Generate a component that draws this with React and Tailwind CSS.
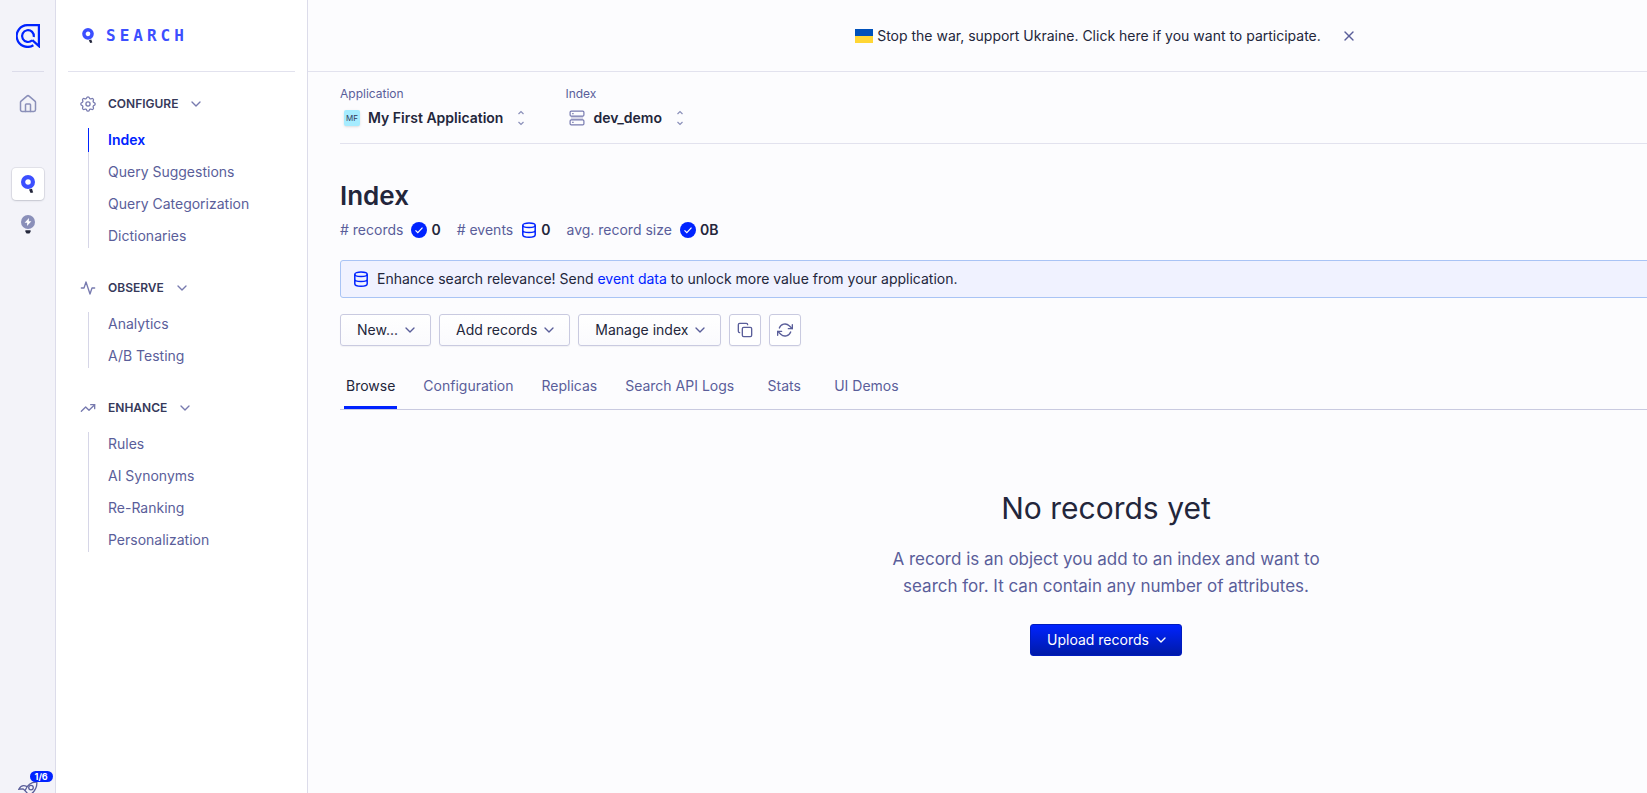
import React from 'react';
import { ChevronDown, Copy, House, TrendingUp, X } from 'lucide-react';
import { FiActivity, FiRefreshCw } from 'react-icons/fi';

const sections = [
  {
    title: 'CONFIGURE',
    icon: GearMark,
    items: ['Index', 'Query Suggestions', 'Query Categorization', 'Dictionaries'],
  },
  { title: 'OBSERVE', icon: FiActivity, items: ['Analytics', 'A/B Testing'] },
  {
    title: 'ENHANCE',
    icon: TrendingUp,
    items: ['Rules', 'AI Synonyms', 'Re-Ranking', 'Personalization'],
  },
];

const tabs = ['Browse', 'Configuration', 'Replicas', 'Search API Logs', 'Stats', 'UI Demos'];

// eight-lobed gear, cropped tight so it fills its box
function GearMark({ className }) {
  return (
    <svg
      viewBox="2 2 20 20"
      className={className}
      fill="none"
      stroke="currentColor"
      strokeWidth="1.6"
      strokeLinejoin="round"
    >
      <path d="M10.325 4.317c.426-1.756 2.924-1.756 3.350 0a1.724 1.724 0 0 0 2.573 1.066c1.543-.94 3.310.826 2.370 2.370a1.724 1.724 0 0 0 1.065 2.572c1.756.426 1.756 2.924 0 3.350a1.724 1.724 0 0 0-1.066 2.573c.94 1.543-.826 3.310-2.370 2.370a1.724 1.724 0 0 0-2.572 1.065c-.426 1.756-2.924 1.756-3.350 0a1.724 1.724 0 0 0-2.573-1.066c-1.543.94-3.310-.826-2.370-2.370a1.724 1.724 0 0 0-1.065-2.572c-1.756-.426-1.756-2.924 0-3.350a1.724 1.724 0 0 0 1.066-2.573c-.94-1.543.826-3.310 2.370-2.370.996.608 2.296.07 2.572-1.065z" />
      <circle cx="12" cy="12" r="2.6" />
    </svg>
  );
}

function AlgoliaLogo() {
  return (
    <svg viewBox="0 0 24 24" className="size-6" fill="none" stroke="#0023ff" strokeWidth="2.2">
      <path d="M17.4 21.2A10.9 10.9 0 1 1 12 1.1h10.9v21l-6.6-6" />
      <path d="M16.2 16.2A5.9 5.9 0 1 1 17.8 13" />
    </svg>
  );
}

function SearchMark({ className }) {
  return (
    <svg viewBox="0 0 14 18" className={className} fill="none">
      <circle cx="7" cy="7" r="4.9" stroke="#3c4fff" strokeWidth="4.2" />
      <path d="M8 14.6l3-.8 1.2 3.6-2.6.6z" fill="#23263b" />
    </svg>
  );
}

function BulbMark() {
  return (
    <svg viewBox="0 0 14 19" className="h-[19px] w-[14px]">
      <circle cx="7" cy="7" r="7" fill="#8a8fb9" />
      <path d="M8 3L3.6 7.8h2.6L6 11l4.4-4.8H7.8z" fill="#fff" />
      <path d="M4.4 15.2h5.2v1.5l-1.2 1.8H5.6l-1.2-1.8z" fill="#23263b" />
    </svg>
  );
}

function RocketMark() {
  return (
    <svg viewBox="0 0 20 20" className="size-5" fill="none" stroke="#5a5e9a" strokeWidth="1.3">
      <path d="M18.8 1.2c.4 5-1.2 9.2-7.6 13.2L7 9.6C9.4 3.8 13.4.9 18.8 1.2z" />
      <circle cx="13" cy="6.6" r="2.3" />
      <path d="M9 5.6C5.6 3.8 2.6 4.8.8 8.2L5 7.8l2 1.8M14.6 11.4c.8 3.2-.4 5.6-3.4 7.6v-4.6M5.2 13.2C3 14 2.2 16 2 18.2c2.2-.2 4.2-1 5-3.2" />
    </svg>
  );
}

function DatabaseMark() {
  return (
    <svg viewBox="0 0 16 16" className="size-4" fill="none" stroke="#0023ff" strokeWidth="1.5">
      <ellipse cx="8" cy="3.3" rx="6.2" ry="2.3" />
      <path d="M1.8 3.3v9.4c0 1.4 2.6 2.5 6.2 2.5s6.2-1.1 6.2-2.5V3.3M1.8 8.2c0 1.3 2.6 2.3 6.2 2.3s6.2-1 6.2-2.3" />
    </svg>
  );
}

function ServerMark() {
  return (
    <svg viewBox="0 0 16 16" className="size-4" fill="none" stroke="#777aaf" strokeWidth="1.2">
      <path d="M2 6h12v4H2z" fill="#d6d6e7" stroke="none" />
      <rect x="1.1" y="1.1" width="13.8" height="5" rx="1.2" fill="#fcfcfe" />
      <rect x="1.1" y="9.9" width="13.8" height="5" rx="1.2" fill="#fcfcfe" />
      <path d="M3.2 3.6h1.4M3.2 12.4h1.4" />
    </svg>
  );
}

function CheckMark() {
  return (
    <svg viewBox="0 0 16 16" className="size-4" fill="none">
      <circle cx="8" cy="8" r="8" fill="#0023ff" />
      <path d="M4.5 8.4l2.3 2.3 4.7-5" stroke="#fff" strokeWidth="1.2" />
    </svg>
  );
}

function UpDown() {
  return (
    <svg viewBox="0 0 8 16" className="h-4 w-2" fill="none" stroke="#8a8fb9" strokeWidth="1.2">
      <path d="M1.5 4L4 1.5 6.5 4M1.5 12L4 14.5 6.5 12" />
    </svg>
  );
}

function Flag() {
  return (
    <svg viewBox="0 0 18 14" className="h-[14px] w-[18px]">
      <path d="M0 0h18v7H0z" fill="#0051ba" />
      <path d="M0 7h18v7H0z" fill="#ffd635" />
    </svg>
  );
}

function Rail() {
  return (
    <nav className="flex w-14 shrink-0 flex-col items-center border-r border-[#dcdcea] bg-[#f3f3f9]">
      <div className="flex h-18 w-8 items-center justify-center border-b border-[#dcdcea]">
        <AlgoliaLogo />
      </div>
      <a href="#home" aria-label="Home" className="mt-[22px]">
        <House className="size-5 text-[#8a8fb9]" strokeWidth={1.8} />
      </a>
      <a
        href="#search"
        aria-label="Search"
        className="mt-[54px] flex size-8 items-center justify-center rounded-sm bg-white shadow-[0_0_0_1px_#23263b14,0_1px_2px_#23263b26]"
      >
        <SearchMark className="h-[18px] w-[14px]" />
      </a>
      <a href="#recommend" aria-label="Recommend" className="mt-[15px]">
        <BulbMark />
      </a>
      <a href="#setup" aria-label="Setup steps" className="relative mt-auto -mb-2">
        <RocketMark />
        <span className="absolute -top-2.5 left-3 rounded-full bg-[#0023ff] px-[5px] text-[9px] leading-[11px] font-bold text-white">
          1/6
        </span>
      </a>
    </nav>
  );
}

function Sidebar() {
  return (
    <aside className="w-[252px] shrink-0 border-r border-[#dcdcea] bg-white px-3 text-sm">
      <div className="flex h-18 items-center gap-3 border-b border-[#e2e2ee] pl-3.5">
        <SearchMark className="h-[15px] w-3" />
        <span className="font-['DejaVu_Sans_Mono',monospace] text-base font-bold tracking-[4px] text-[#3c4fff]">
          SEARCH
        </span>
      </div>
      <div className="flex flex-col gap-7 pt-5">
        {sections.map(({ title, icon: Icon, items }) => (
          <section key={title}>
            <button type="button" className="flex h-6 items-center pl-3 text-xs font-semibold text-[#36395a]">
              <Icon className="mr-3 size-4 text-[#777aaf]" />
              {title}
              <ChevronDown className="ml-2.5 size-4 text-[#777aaf]" />
            </button>
            <ul className="mt-3 ml-5 flex flex-col gap-2 bg-[linear-gradient(#d6d6e7,#d6d6e7)] bg-[length:1px_100%] bg-no-repeat">
              {items.map((item) => (
                <li key={item} className="h-6">
                  <a
                    href="#nav"
                    className={
                      item === 'Index'
                        ? 'block border-l border-[#0023ff] pl-[19px] leading-6 font-semibold text-[#0023ff]'
                        : 'block pl-5 leading-6 text-[#5a5e9a]'
                    }
                  >
                    {item}
                  </a>
                </li>
              ))}
            </ul>
          </section>
        ))}
      </div>
    </aside>
  );
}

function Stat({ label, value, icon }) {
  return (
    <div className="flex items-center">
      <dt className="mr-2 text-[#5a5e9a]">{label}</dt>
      <dd className="flex items-center gap-1 font-semibold">
        {icon}
        {value}
      </dd>
    </div>
  );
}

function MenuButton({ children }) {
  return (
    <button
      type="button"
      className="flex h-8 items-center gap-1 rounded-[3px] border border-[#c9cae0] bg-linear-to-b from-white to-[#fafafd] pr-3 pl-4 shadow-[0_1px_1px_#23263b0d]"
    >
      {children}
      <ChevronDown className="size-4 text-[#5a5e9a]" />
    </button>
  );
}

function IconButton({ label, icon: Icon }) {
  return (
    <button
      type="button"
      aria-label={label}
      className="flex size-8 items-center justify-center rounded-[3px] border border-[#c9cae0] bg-white shadow-[0_1px_1px_#23263b0d]"
    >
      <Icon className="size-4 text-[#5a5e9a]" />
    </button>
  );
}

function App() {
  return (
    <div className="flex h-screen overflow-hidden bg-[#fcfcfe] font-['Inter',sans-serif] text-sm text-[#23263b]">
      <Rail />
      <Sidebar />
      <main className="min-w-[1596px] flex-1">
        <div className="flex h-18 items-center justify-center border-b border-[#e2e2ee]">
          <a href="#ukraine" className="flex items-center gap-1">
            <Flag />
            Stop the war, support Ukraine. Click here if you want to participate.
          </a>
          <button type="button" aria-label="Close" className="ml-5">
            <X className="size-4 text-[#5a5e9a]" />
          </button>
        </div>

        <div className="px-8">
          <div className="flex h-18 gap-10 border-b border-[#e2e2ee] pt-3">
            <div>
              <div className="text-xs leading-5 text-[#5a5e9a]">Application</div>
              <button type="button" className="mt-0.5 flex items-center pl-1 leading-6 font-semibold">
                <span className="mr-2 flex size-4 items-center justify-center rounded-xs bg-[#a6ecff] text-[8px] font-normal text-[#36395a] shadow-sm">
                  MF
                </span>
                My First Application
                <span className="ml-3.5">
                  <UpDown />
                </span>
              </button>
            </div>
            <div>
              <div className="text-xs leading-5 text-[#5a5e9a]">Index</div>
              <button type="button" className="mt-0.5 flex items-center pl-1 leading-6 font-semibold">
                <span className="mr-2">
                  <ServerMark />
                </span>
                dev_demo
                <span className="ml-3.5">
                  <UpDown />
                </span>
              </button>
            </div>
          </div>

          <h1 className="mt-9 text-[26px] leading-8 font-semibold">Index</h1>
          <dl className="mt-1.5 flex h-6 items-center gap-4">
            <Stat label="# records" value="0" icon={<CheckMark />} />
            <Stat label="# events" value="0" icon={<DatabaseMark />} />
            <Stat label="avg. record size" value="0B" icon={<CheckMark />} />
          </dl>

          <div className="mt-[18px] flex h-[38px] items-center gap-2 rounded-[3px] border border-[#a9c4f5] bg-[#f0f2ff] px-3">
            <DatabaseMark />
            <p>
              Enhance search relevance! Send{' '}
              <a href="#events" className="text-[#0023ff]">
                event data
              </a>{' '}
              to unlock more value from your application.
            </p>
          </div>

          <div className="mt-4 flex gap-2">
            <MenuButton>New...</MenuButton>
            <MenuButton>Add records</MenuButton>
            <MenuButton>Manage index</MenuButton>
            <IconButton label="Copy" icon={Copy} />
            <IconButton label="Refresh" icon={FiRefreshCw} />
          </div>

          <div role="tablist" className="mt-4 flex h-12 gap-6 border-b border-[#c9cae0] pl-1">
            {tabs.map((tab) => (
              <button
                key={tab}
                type="button"
                role="tab"
                aria-selected={tab === 'Browse'}
                className={
                  tab === 'Browse'
                    ? 'min-w-12 border-b-3 border-[#0023ff] px-0.5 pt-[3px]'
                    : 'min-w-12 px-0.5 text-[#5a5e9a]'
                }
              >
                {tab}
              </button>
            ))}
          </div>

          <div className="flex flex-col items-center pt-20 text-center">
            <h2 className="text-[30px] leading-9">No records yet</h2>
            <p className="mt-5 w-[440px] text-[17px] leading-[27px] text-[#5a5e9a]">
              A record is an object you add to an index and want to search for. It can contain any number of
              attributes.
            </p>
            <button
              type="button"
              className="mt-6 flex h-8 items-center gap-1 rounded-[3px] border border-[#001bbf] bg-linear-to-b from-[#0023ff] to-[#001aa8] pr-3 pl-4 text-white"
            >
              Upload records
              <ChevronDown className="size-4" />
            </button>
          </div>
        </div>
      </main>
    </div>
  );
}

export default App;
